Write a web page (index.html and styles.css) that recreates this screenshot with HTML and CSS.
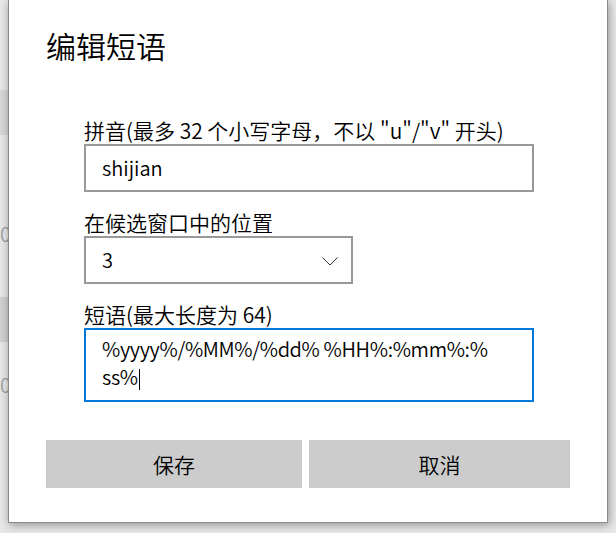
FILE: index.html
```html
<!DOCTYPE html>
<html lang="zh-CN">
<head>
<meta charset="utf-8">
<title>编辑短语</title>
<link rel="stylesheet" href="styles.css">
</head>
<body>
<div class="backdrop">
  <div class="bg-row bg-band"></div>
  <div class="bg-row bg-text">0</div>
  <div class="bg-row bg-band bg-band-dark"></div>
  <div class="bg-row bg-text bg-text-2">0</div>
</div>

<div class="dialog">
  <h1 class="title">编辑短语</h1>

  <div class="form">
    <div class="field-label">拼音(最多 32 个小写字母，不以 "u"/"v" 开头)</div>
    <div class="textbox">shijian</div>

    <div class="field-label spaced">在候选窗口中的位置</div>
    <div class="combo">
      <span>3</span>
      <svg class="chevron" width="16" height="9" viewBox="0 0 16 9"><polyline points="0.5,0.5 8,8 15.5,0.5" fill="none" stroke="#333" stroke-width="1"/></svg>
    </div>

    <div class="field-label spaced">短语(最大长度为 64)</div>
    <div class="textarea">
      <div class="line">%yyyy%/%MM%/%dd% %HH%:%mm%:%</div>
      <div class="line">ss%<span class="caret"></span></div>
    </div>
  </div>

  <div class="buttons">
    <div class="btn">保存</div>
    <div class="btn">取消</div>
  </div>
</div>
</body>
</html>
```

FILE: styles.css
```css
html, body {
  margin: 0;
  padding: 0;
}

body {
  width: 616px;
  height: 533px;
  overflow: hidden;
  background: #e8e8e8;
  font-family: "Noto Sans CJK SC", "Microsoft YaHei", sans-serif;
  font-weight: 350;
  color: #000;
  position: relative;
}

/* underlying window visible at the left edge */
.backdrop {
  padding-top: 90px;
  width: 40px;
}

.bg-row {
  height: 45px;
}

.bg-band {
  background: #d9d9d9;
}

.bg-band-dark {
  background: #d2d2d2;
  margin-top: 40px;
}

.bg-text {
  margin-top: 76px;
  height: 46px;
  font-size: 20px;
  line-height: 46px;
  color: #a0a0a0;
}

.bg-text-2 {
  margin-top: 20px;
}

/* dialog window */
.dialog {
  position: absolute;
  left: 8px;
  top: 0;
  width: 600px;
  height: 523px;
  box-sizing: border-box;
  background: #fff;
  border: 1px solid #8a8a8a;
  border-top: 0;
  box-shadow: 1px 2px 9px rgba(0, 0, 0, 0.38);
  padding: 25px 37px 0 37px;
}

.title {
  margin: 0;
  font-size: 30px;
  line-height: 40px;
  font-weight: 350;
}

.form {
  margin-top: 51px;
  margin-left: 38px;
}

.field-label {
  font-size: 21px;
  line-height: 28px;
  white-space: nowrap;
}

.field-label.spaced {
  margin-top: 16px;
}

.textbox {
  width: 450px;
  height: 48px;
  box-sizing: border-box;
  border: 2px solid #999;
  padding: 8px 16px;
  font-size: 20px;
  line-height: 28px;
}

.combo {
  width: 269px;
  height: 48px;
  box-sizing: border-box;
  border: 2px solid #999;
  padding: 8px 13px 8px 16px;
  font-size: 20px;
  line-height: 28px;
  display: flex;
  align-items: center;
  justify-content: space-between;
}

.chevron {
  display: block;
  margin-top: 3px;
}

.textarea {
  width: 450px;
  height: 74px;
  box-sizing: border-box;
  border: 2px solid #0078d7;
  padding: 5px 16px 0 16px;
  font-size: 20px;
  line-height: 28px;
  letter-spacing: -0.35px;
}

.line {
  white-space: nowrap;
}

.caret {
  display: inline-block;
  width: 1px;
  height: 21px;
  background: #000;
  vertical-align: -5px;
  margin-left: 1px;
}

.buttons {
  margin-top: 38px;
  display: grid;
  grid-template-columns: 256px 1fr;
  column-gap: 7px;
}

.btn {
  height: 48px;
  background: #cccccc;
  font-size: 21px;
  line-height: 48px;
  text-align: center;
}
```
